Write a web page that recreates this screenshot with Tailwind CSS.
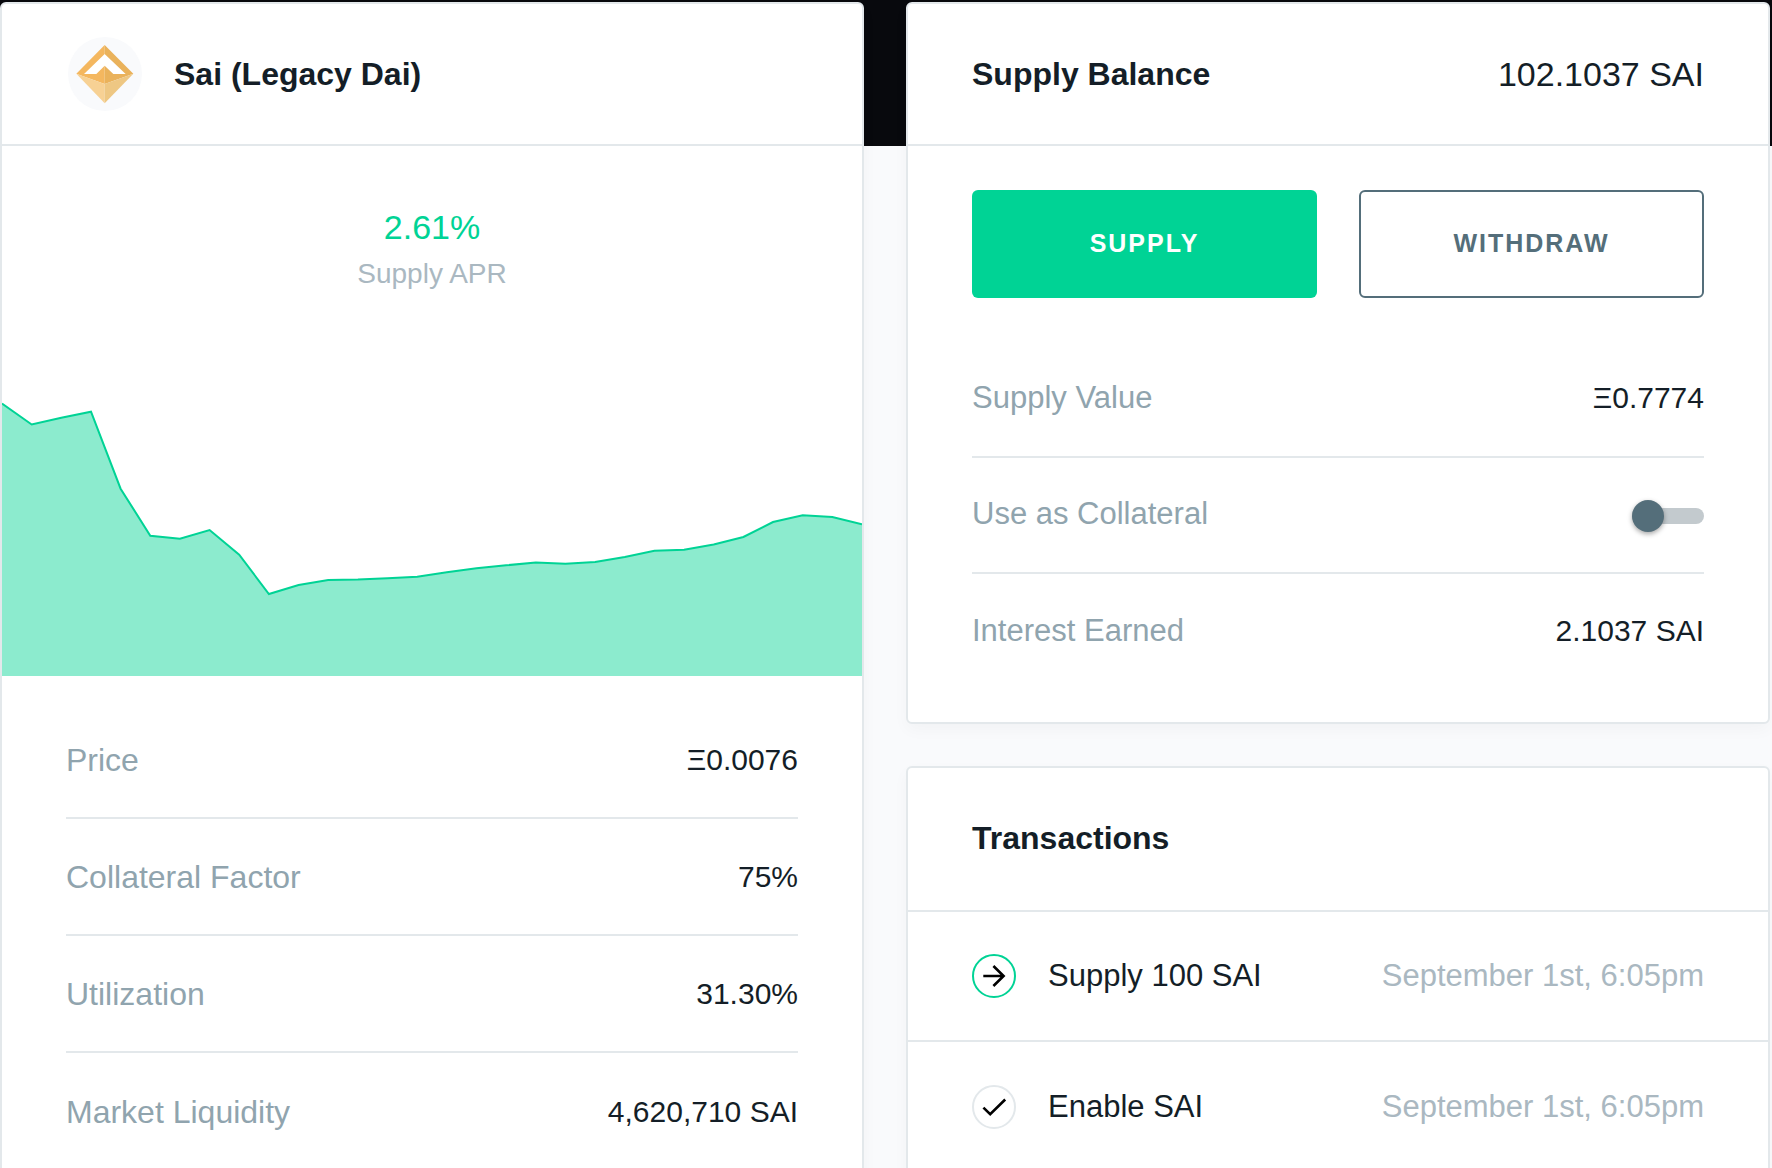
<!DOCTYPE html>
<html lang="en">
<head>
<meta charset="utf-8">
<meta name="viewport" content="width=device-width, initial-scale=1">
<title>Sai (Legacy Dai)</title>
<script src="https://cdn.jsdelivr.net/npm/@tailwindcss/browser@4"></script>
</head>
<body class="min-h-screen bg-[#f9fafc] bg-[linear-gradient(#08090d_146px,#f9fafc_146px)] font-['Liberation_Sans',Arial,sans-serif] text-[#141e27]">
<main class="grid min-h-screen grid-cols-2 gap-[42px] pt-0.5 pr-0.5">

  <!-- Market details -->
  <section class="flex flex-col rounded-md border-2 border-[#e3e8eb] bg-white shadow-[0_6px_16px_rgba(0,0,0,0.03)]">
    <header class="flex h-[142px] items-center gap-8 border-b-2 border-[#e3e8eb] px-[66px]">
      <svg class="size-[74px] shrink-0" viewBox="0 0 222 222" aria-hidden="true">
        <circle cx="111" cy="111" r="111" fill="#f9fafc"/>
        <path d="M110 51 173 111H48Z" fill="#fff"/>
        <path d="M110 24 25 110 110 141V86L85 111H48L110 51Z" fill="#f4b75f"/>
        <path d="M110 24 196 110 110 141V86L136 111H173L110 51Z" fill="#eab25b"/>
        <path d="M25 110 110 141V199Z" fill="#f7d194"/>
        <path d="M196 110 110 141V199Z" fill="#eec783"/>
      </svg>
      <h1 class="text-[32px] leading-10 font-bold">Sai (Legacy Dai)</h1>
    </header>

    <div class="flex h-[254px] flex-col items-center pt-14">
      <p class="text-[34px] leading-[50px] text-[#00d395]">2.61%</p>
      <p class="text-[28px] leading-[44px] text-[#aab8c1]">Supply APR</p>
    </div>
    <svg class="block h-[276px] w-full" viewBox="0 0 860 276" preserveAspectRatio="none" role="img" aria-label="Supply APR history">
      <path fill="#8cebce" d="M0 3.5 29.7 24.5 59.3 17.7 89 11.7 118.6 88.7 148.3 135.7 177.9 138.7 207.6 130 237.2 154.7 266.9 194 296.6 185 326.2 180 355.9 179.5 385.5 178.3 415.2 176.7 444.8 172.3 474.5 168.3 504.1 165.3 533.8 162.5 563.4 163.7 593.1 162 622.8 157 652.4 150.8 682.1 149.8 711.7 144.5 741.4 137 771 122 800.7 115.3 830.3 117 860 124.3V276H0Z"/>
      <path fill="none" stroke="#00d395" stroke-width="2" vector-effect="non-scaling-stroke" d="M0 3.5 29.7 24.5 59.3 17.7 89 11.7 118.6 88.7 148.3 135.7 177.9 138.7 207.6 130 237.2 154.7 266.9 194 296.6 185 326.2 180 355.9 179.5 385.5 178.3 415.2 176.7 444.8 172.3 474.5 168.3 504.1 165.3 533.8 162.5 563.4 163.7 593.1 162 622.8 157 652.4 150.8 682.1 149.8 711.7 144.5 741.4 137 771 122 800.7 115.3 830.3 117 860 124.3"/>
    </svg>

    <dl class="divide-y-2 divide-[#e3e8eb] px-16 pt-[26px] pb-8">
      <div class="flex h-[117px] items-center justify-between">
        <dt class="text-[32px] text-[#90a4ae]">Price</dt>
        <dd class="text-[30px]">Ξ0.0076</dd>
      </div>
      <div class="flex h-[117px] items-center justify-between">
        <dt class="text-[32px] text-[#90a4ae]">Collateral Factor</dt>
        <dd class="text-[30px]">75%</dd>
      </div>
      <div class="flex h-[117px] items-center justify-between">
        <dt class="text-[32px] text-[#90a4ae]">Utilization</dt>
        <dd class="text-[30px]">31.30%</dd>
      </div>
      <div class="flex h-[117px] items-center justify-between">
        <dt class="text-[32px] text-[#90a4ae]">Market Liquidity</dt>
        <dd class="text-[30px]">4,620,710 SAI</dd>
      </div>
    </dl>
  </section>

  <div class="flex flex-col gap-[42px]">
    <!-- Supply balance -->
    <section class="rounded-md border-2 border-[#e3e8eb] bg-white pb-8 shadow-[0_6px_16px_rgba(0,0,0,0.03)]">
      <header class="flex h-[142px] items-center justify-between border-b-2 border-[#e3e8eb] px-16">
        <h2 class="text-[32px] leading-10 font-bold">Supply Balance</h2>
        <p class="text-[34px] leading-10">102.1037 SAI</p>
      </header>
      <div class="grid grid-cols-2 gap-[42px] px-16 pt-11">
        <button type="button" class="h-[108px] rounded-md bg-[#00d395] text-[25px] font-bold tracking-[2px] text-white">SUPPLY</button>
        <button type="button" class="h-[108px] rounded-md border-2 border-[#546e7a] text-[25px] font-bold tracking-[2px] text-[#546e7a]">WITHDRAW</button>
      </div>
      <div class="divide-y-2 divide-[#e3e8eb] px-16 pt-11">
        <div class="flex h-[116px] items-center justify-between">
          <span class="pb-0.5 text-[31px] text-[#90a4ae]">Supply Value</span>
          <span class="pb-1 text-[30px]">Ξ0.7774</span>
        </div>
        <div class="flex h-[116px] items-center justify-between">
          <label for="collateral" class="pb-0.5 text-[31px] text-[#90a4ae]">Use as Collateral</label>
          <input id="collateral" type="checkbox" role="switch" class="mt-0.5 flex h-4 w-[72px] cursor-pointer appearance-none items-center rounded-full bg-[#c3cace] before:size-8 before:rounded-full before:bg-[#546e7a] before:shadow-[0_2px_5px_rgba(0,0,0,0.35)] before:content-[''] checked:justify-end checked:before:bg-[#00d395]">
        </div>
        <div class="flex h-[116px] items-center justify-between">
          <span class="pb-0.5 text-[31px] text-[#90a4ae]">Interest Earned</span>
          <span class="pb-1 text-[30px]">2.1037 SAI</span>
        </div>
      </div>
    </section>

    <!-- Transactions -->
    <section class="flex-1 rounded-md border-2 border-[#e3e8eb] bg-white shadow-[0_6px_16px_rgba(0,0,0,0.03)]">
      <header class="flex h-36 items-center border-b-2 border-[#e3e8eb] px-16 pb-0.5">
        <h2 class="text-[32px] leading-10 font-bold">Transactions</h2>
      </header>
      <ul class="divide-y-2 divide-[#e3e8eb]">
        <li class="flex h-[130px] items-center gap-8 px-16">
          <svg class="size-11 shrink-0" viewBox="0 0 44 44" fill="none" aria-hidden="true">
            <circle cx="22" cy="22" r="21" stroke="#00d395" stroke-width="2"/>
            <path d="M11.3 22H31.5M21.4 12 31.6 22 21.4 32" stroke="#000" stroke-width="2.6"/>
          </svg>
          <span class="flex-1 text-[31px]">Supply 100 SAI</span>
          <time class="text-[31px] text-[#aab8c1]">September 1st, 6:05pm</time>
        </li>
        <li class="flex h-[130px] items-center gap-8 px-16">
          <svg class="size-11 shrink-0" viewBox="0 0 44 44" fill="none" aria-hidden="true">
            <circle cx="22" cy="22" r="21" stroke="#e3e8eb" stroke-width="2"/>
            <path d="M11.4 22.6 18.2 29.2 33.2 14.5" stroke="#000" stroke-width="2.6"/>
          </svg>
          <span class="flex-1 text-[31px]">Enable SAI</span>
          <time class="text-[31px] text-[#aab8c1]">September 1st, 6:05pm</time>
        </li>
      </ul>
    </section>
  </div>
</main>
</body>
</html>
